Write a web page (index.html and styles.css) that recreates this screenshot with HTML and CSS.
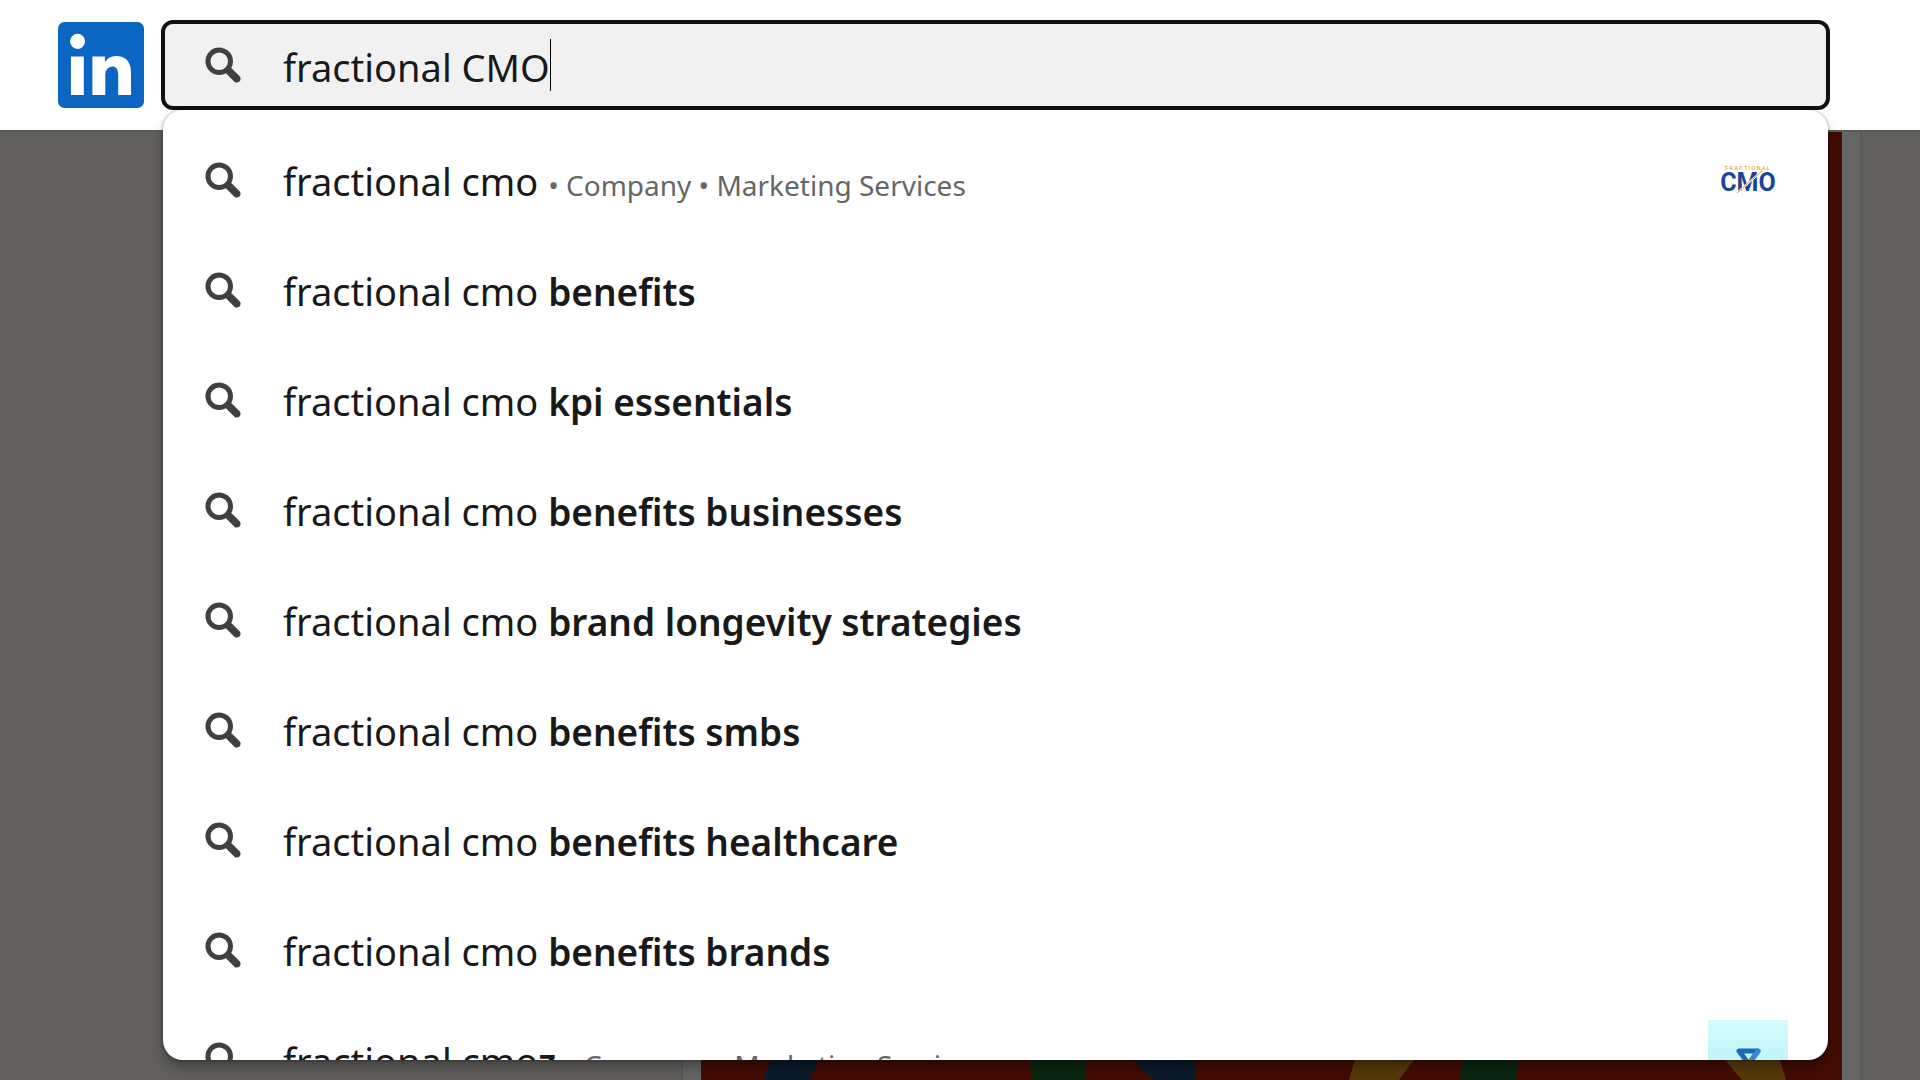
FILE: index.html
```html
<!DOCTYPE html>
<html lang="en">
<head>
    <meta charset="UTF-8">
    <title>Search | LinkedIn</title>
    <link rel="stylesheet" href="styles.css">
</head>
<body>

    <!-- Shared icons -->
    <svg class="sprite" aria-hidden="true">
        <symbol id="icon-search" viewBox="0 0 16 16">
            <path d="M14.56 12.44L11.3 9.18a5.51 5.51 0 10-2.12 2.12l3.26 3.26a1.5 1.5 0 102.12-2.12zM3 6.5A3.5 3.5 0 116.5 10 3.5 3.5 0 013 6.5z"/>
        </symbol>
    </svg>

    <header class="header">
        <a href="#" class="logo" aria-label="LinkedIn">
            <svg viewBox="2 2 20 20">
                <path d="M20.5 2h-17A1.5 1.5 0 002 3.5v17A1.5 1.5 0 003.5 22h17a1.5 1.5 0 001.5-1.5v-17A1.5 1.5 0 0020.5 2zM8 19H5v-9h3zM6.5 8.25A1.75 1.75 0 118.3 6.5a1.78 1.78 0 01-1.8 1.75zM19 19h-3v-4.74c0-1.42-.6-1.93-1.38-1.93A1.74 1.74 0 0013 14.19a.66.66 0 000 .14V19h-3v-9h2.9v1.3a3.11 3.11 0 012.7-1.4c1.55 0 3.36.86 3.36 3.66z"/>
            </svg>
        </a>

        <div class="search">
            <label class="search-box">
                <svg class="icon"><use href="#icon-search"/></svg>
                <input type="text" class="search-input" value="fractional CMO" aria-label="Search">
                <span class="caret"></span>
            </label>

            <!-- Suggestions -->
            <ul class="suggestions">
                <li>
                    <a href="#" class="suggestion">
                        <svg class="icon"><use href="#icon-search"/></svg>
                        <span class="text">fractional cmo <span class="meta">• Company • Marketing Services</span></span>
                        <svg class="thumb" viewBox="0 0 80 80">
                            <text class="cmo-top" x="40" y="30" text-anchor="middle">FRACTIONAL</text>
                            <text class="cmo-name" x="40" y="51" text-anchor="middle">CMO</text>
                            <path class="cmo-gap" d="M29 53L54 31"/>
                            <path class="cmo-line" d="M29 53L54 31"/>
                        </svg>
                    </a>
                </li>
                <li>
                    <a href="#" class="suggestion">
                        <svg class="icon"><use href="#icon-search"/></svg>
                        <span class="text">fractional cmo <strong>benefits</strong></span>
                    </a>
                </li>
                <li>
                    <a href="#" class="suggestion">
                        <svg class="icon"><use href="#icon-search"/></svg>
                        <span class="text">fractional cmo <strong>kpi essentials</strong></span>
                    </a>
                </li>
                <li>
                    <a href="#" class="suggestion">
                        <svg class="icon"><use href="#icon-search"/></svg>
                        <span class="text">fractional cmo <strong>benefits businesses</strong></span>
                    </a>
                </li>
                <li>
                    <a href="#" class="suggestion">
                        <svg class="icon"><use href="#icon-search"/></svg>
                        <span class="text">fractional cmo <strong>brand longevity strategies</strong></span>
                    </a>
                </li>
                <li>
                    <a href="#" class="suggestion">
                        <svg class="icon"><use href="#icon-search"/></svg>
                        <span class="text">fractional cmo <strong>benefits smbs</strong></span>
                    </a>
                </li>
                <li>
                    <a href="#" class="suggestion">
                        <svg class="icon"><use href="#icon-search"/></svg>
                        <span class="text">fractional cmo <strong>benefits healthcare</strong></span>
                    </a>
                </li>
                <li>
                    <a href="#" class="suggestion">
                        <svg class="icon"><use href="#icon-search"/></svg>
                        <span class="text">fractional cmo <strong>benefits brands</strong></span>
                    </a>
                </li>
                <li>
                    <a href="#" class="suggestion">
                        <svg class="icon"><use href="#icon-search"/></svg>
                        <span class="text">fractional cmo<strong>z</strong> <span class="meta">• Company • Marketing Services</span></span>
                        <svg class="thumb thumb-cmoz" viewBox="0 0 80 80">
                            <path d="M40 43L31 31H50L31 58" fill="none" stroke="#1a68bd" stroke-width="5" stroke-linejoin="round"/>
                            <path d="M40 45L50 31" fill="none" stroke="#3d85d4" stroke-width="5" stroke-linecap="round"/>
                        </svg>
                    </a>
                </li>
            </ul>
        </div>
    </header>

    <!-- Dimmed feed behind the dropdown -->
    <main class="feed">
        <div class="post">
            <div class="post-image">
                <svg viewBox="0 0 1141 20" preserveAspectRatio="none">
                    <path fill="#0b1c2c" d="M70 0h48l-10 20H62zM432 0h63v20h-43z"/>
                    <path fill="#09260e" d="M329 0h55v20h-53zM761 0h56l-2 20h-56z"/>
                    <path fill="#563b0b" d="M654 0h59l-15 20h-50zM1024 0h55l6 20h-44z"/>
                </svg>
            </div>
        </div>
    </main>

</body>
</html>
```

FILE: styles.css
```css
/* General Styles */
* {
    box-sizing: border-box;
}

body {
    margin: 0;
    font-family: 'Segoe UI', 'Noto Sans', sans-serif;
    font-size: 38px;
    color: #191919;
    background-color: #62605d;
    overflow: hidden;
}

.sprite {
    display: none;
}

a {
    color: inherit;
    text-decoration: none;
}

/* Header */
.header {
    display: flex;
    gap: 17px;
    height: 130px;
    padding: 20px 90px 20px 58px;
    background-color: #fff;
}

.logo {
    width: 86px;
    height: 86px;
    margin-top: 2px;
}

.logo svg {
    display: block;
    fill: #0a66c2;
}

/* Search box */
.search {
    position: relative;
    flex: 1;
}

.search-box {
    display: flex;
    align-items: center;
    height: 90px;
    padding: 0 38px;
    border: 4px solid #111;
    border-radius: 12px;
    background-color: #f1f1f1;
}

.icon {
    flex: none;
    width: 40px;
    height: 40px;
    margin-right: 40px;
    fill: #404040;
}

.search-input {
    field-sizing: content;
    padding: 4px 0 0;
    border: none;
    outline: none;
    background: none;
    font: inherit;
    color: inherit;
}

.caret {
    width: 1px;
    height: 52px;
    background-color: #000;
}

/* Suggestions dropdown */
.suggestions {
    position: absolute;
    z-index: 10;
    top: 90px;
    left: 2px;
    right: 2px;
    height: calc(100vh - 130px);
    margin: 0;
    padding: 15px 0;
    list-style: none;
    border-radius: 20px;
    background-color: #fff;
    box-shadow: 0 0 0 2px rgba(0, 0, 0, 0.1), 0 8px 12px rgba(0, 0, 0, 0.3);
    overflow: hidden;
}

.suggestion {
    display: flex;
    align-items: center;
    height: 110px;
    padding: 0 40px;
}

.text {
    flex: 1;
    padding-top: 2px;
    white-space: nowrap;
}

.text strong {
    font-size: 37px;
    font-weight: 600;
}

.meta {
    font-size: 28px;
    color: #666;
}

.thumb {
    width: 80px;
    height: 80px;
}

.thumb-cmoz {
    background: linear-gradient(#d6fbfc, #b4f3f7 60px);
}

.cmo-top {
    font: 500 6px Roboto, sans-serif;
    letter-spacing: 1px;
    fill: #f0a83c;
}

.cmo-name {
    font: 700 25px Roboto, sans-serif;
    fill: #1c4596;
}

.cmo-gap {
    stroke: #fff;
    stroke-width: 2;
}

.cmo-line {
    stroke: #e8962e;
    stroke-width: 1;
}

/* Feed */
.feed {
    height: calc(100vh - 130px);
    padding: 0 58px 0 681px;
    border-top: 2px solid #5b5a58;
}

.post {
    height: 100%;
    padding: 0 18px;
    border: solid #5b5a58;
    border-width: 0 2px;
    background-color: #666;
}

.post-image {
    display: flex;
    align-items: flex-end;
    height: 100%;
    background-color: #420c02;
}

.post-image svg {
    width: 100%;
    height: 20px;
}
```
